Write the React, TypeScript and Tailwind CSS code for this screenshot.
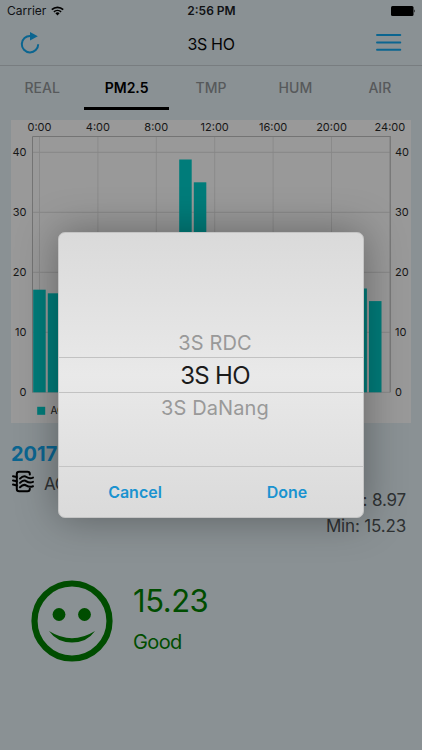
import React from "react";

const gridHours = ["0:00", "4:00", "8:00", "12:00", "16:00", "20:00", "24:00"];
const gridValues = [0, 10, 20, 30, 40];
const bars = [
  { hour: 0, value: 17.1 },
  { hour: 1, value: 16.5 },
  { hour: 10, value: 38.8 },
  { hour: 11, value: 35 },
  { hour: 22, value: 17.3 },
  { hour: 23, value: 15.2 },
];

const hourX = (h: number) => 28.5 + h * 14.6;
const valueY = (v: number) => 272.3 - v * 6;

function StatusBar() {
  return (
    <div className="grid h-[22px] grid-cols-3 items-center pl-[7px] pr-[6px] text-[12px] leading-none text-[#101214]">
      <div className="flex items-center gap-[6px]">
        <span>Carrier</span>
        <svg width="13" height="10" viewBox="0 0 13 10" className="-ml-px -mt-px">
          <path d="M0.8 3.6 A8.2 8.2 0 0 1 12.2 3.6" fill="none" stroke="#000" strokeWidth="1.7" />
          <path d="M2.9 5.9 A5.2 5.2 0 0 1 10.1 5.9" fill="none" stroke="#000" strokeWidth="1.6" />
          <path d="M4.4 7.3 A2.9 2.9 0 0 1 8.6 7.3 L6.5 9.6 Z" fill="#000" />
        </svg>
      </div>
      <div className="text-center font-semibold">2:56 PM</div>
      <div className="flex justify-end">
        <svg width="25" height="10" viewBox="0 0 25 10">
          <rect width="22.5" height="10" rx="1.5" fill="#000" />
          <path d="M23.2 3.3 q1.5 1.7 0 3.4z" fill="#000" />
        </svg>
      </div>
    </div>
  );
}

function NavBar() {
  return (
    <div className="grid h-[44px] grid-cols-3 items-center border-b border-[#787d80] pl-5 pr-[20px]">
      <svg width="20" height="22" viewBox="0 0 20 22" className="-mt-[2px]">
        <path d="M10.5 4 A8.2 8.2 0 1 0 18.2 12.2" fill="none" stroke="#0b6590" strokeWidth="2" />
        <path d="M10 0 L17.8 4.2 L10 8.6 Z" fill="#0b6590" />
      </svg>
      <div className="text-center text-[16px] tracking-[-0.02em] text-[#050505]">3S HO</div>
      <svg width="26" height="18" viewBox="0 0 26 18" className="-mt-[4px] justify-self-end" stroke="#0b6590" strokeWidth="1.9" strokeLinecap="round">
        <path d="M1 2 H24.3 M1 9.5 H24.3 M1 16.7 H24.3" />
      </svg>
    </div>
  );
}

function Tabs() {
  return (
    <div className="grid h-[44px] grid-cols-5 text-center text-[14px] font-medium leading-[44px] text-[#57595b]">
      <div>REAL</div>
      <div className="h-[44px] border-b-[3px] border-black font-semibold text-black">PM2.5</div>
      <div>TMP</div>
      <div>HUM</div>
      <div>AIR</div>
    </div>
  );
}

function Chart() {
  return (
    <svg width="400" height="303" viewBox="0 0 400 303" className="ml-[11px] mt-[10px] block bg-[#999999] text-[11px]">
      {gridHours.map((label, i) => (
        <g key={label}>
          <line x1={hourX(i * 4)} x2={hourX(i * 4)} y1="16" y2="272.3" stroke="#8a8a8a" />
          <text x={hourX(i * 4)} y="10.7" textAnchor="middle" fill="#171717">{label}</text>
        </g>
      ))}
      {gridValues.map((v) => (
        <g key={v}>
          <line x1="21" x2="379" y1={valueY(v)} y2={valueY(v)} stroke="#868686" />
          <text x="15.5" y={valueY(v) + 3.7} textAnchor="end" fill="#171717">{v}</text>
          <text x="384" y={valueY(v) + 3.7} fill="#171717">{v}</text>
        </g>
      ))}
      <path d="M21.5 272.3 V16.5 H379" fill="none" stroke="#747474" />
      <path d="M379.3 16 V272.3" stroke="#747474" />
      {bars.map((b) => (
        <rect key={b.hour} x={hourX(b.hour) - 6.3} y={valueY(b.value)} width="12.5" height={b.value * 6} fill="#007c7a" />
      ))}
      <rect x="26.2" y="286.8" width="8" height="8" fill="#007c7a" />
      <text x="39.5" y="294.3" fontSize="10" fill="#171717">AQI</text>
    </svg>
  );
}

function Details() {
  return (
    <div className="px-[11px] pt-[18px]">
      <div className="text-[20px] font-bold leading-[26px] text-[#0b6590]">2017-08-24</div>
      <div className="flex justify-between text-[17px] text-[#2f3233]">
        <div className="flex gap-[9px]">
          <svg width="24" height="24" viewBox="0 0 24 24" fill="none" stroke="#000" strokeWidth="2" strokeLinecap="round" strokeLinejoin="round" className="mt-[3px]">
            <path d="M18.8 4.6 V4 Q18.8 1.8 16.5 1.8 H8.2 Q5.8 1.8 5.8 4 V19 Q5.8 21.3 8.2 21.3 H16.5 Q18.8 21.3 18.8 18.8" />
            <path d="M2 6.3 L5.8 7 M2 10.4 L5.8 11.2 M2 14.6 L5.8 15.4" />
            <path d="M9 8.6 Q12.5 5 15.5 7 Q18.5 9 22 7.6 M9 12.9 Q12.5 9.3 15.5 11.3 Q18.5 13.3 22 11.9 M9 17.2 Q12.5 13.6 15.5 15.6 Q18.5 17.6 22 16.2" />
          </svg>
          <span className="mt-[7px] leading-[20px] tracking-[-0.02em]">AQI</span>
        </div>
        <div className="mr-[5px] mt-[21px] text-right leading-[25.5px] tracking-[-0.01em]">
          <div>Max: 8.97</div>
          <div>Min: 15.23</div>
        </div>
      </div>
      <div className="ml-5 mt-[42px] flex items-start gap-[20px] text-[#004d00]">
        <svg width="82" height="82" viewBox="0 0 82 82" className="-mt-px">
          <circle cx="41" cy="41" r="37.5" fill="none" stroke="currentColor" strokeWidth="6.2" />
          <circle cx="28" cy="34.5" r="6.4" fill="currentColor" />
          <circle cx="53.5" cy="34.5" r="6.4" fill="currentColor" />
          <path d="M18 51 Q41 65.5 64 51 Q56 62.5 41 62.5 Q26 62.5 18 51Z" fill="currentColor" />
        </svg>
        <div>
          <div className="text-[31px] leading-[40px] tracking-[-0.015em]">15.23</div>
          <div className="mt-[7px] text-[20px] leading-[28px] tracking-[-0.03em]">Good</div>
        </div>
      </div>
    </div>
  );
}

function PickerDialog() {
  return (
    <div className="absolute left-[58px] top-[232px] flex h-[286px] w-[306px] flex-col rounded-[7px] border border-[#c4c4c4] bg-linear-to-b from-[#dadada] via-[#e9e9e9] to-[#dadada] text-center shadow-[0_0_40px_rgba(0,0,0,0.35)]">
      <div className="h-[124px] pl-[8px] pt-[97px] text-[20px] leading-[26px] tracking-[0.005em] text-[#999999]">3S RDC</div>
      <div className="h-[36px] border-y border-[#c2c2c2] pl-[8px] text-[24px] leading-[35px] tracking-[-0.03em] text-[#1b1b1b]">3S HO</div>
      <div className="h-[73px] pl-[8px] pt-[2px] text-[20px] leading-[26px] tracking-[0.005em] text-[#999999]">3S DaNang</div>
      <div className="grid flex-1 grid-cols-2 items-center border-t border-[#c4c4c4] text-[16px] font-semibold text-[#1a93d0]">
        <button>Cancel</button>
        <button>Done</button>
      </div>
    </div>
  );
}

export default function App() {
  return (
    <div className="relative h-[750px] w-[422px] overflow-hidden bg-[#8a9194] font-['Inter',sans-serif]">
      <StatusBar />
      <NavBar />
      <Tabs />
      <Chart />
      <Details />
      <PickerDialog />
    </div>
  );
}
